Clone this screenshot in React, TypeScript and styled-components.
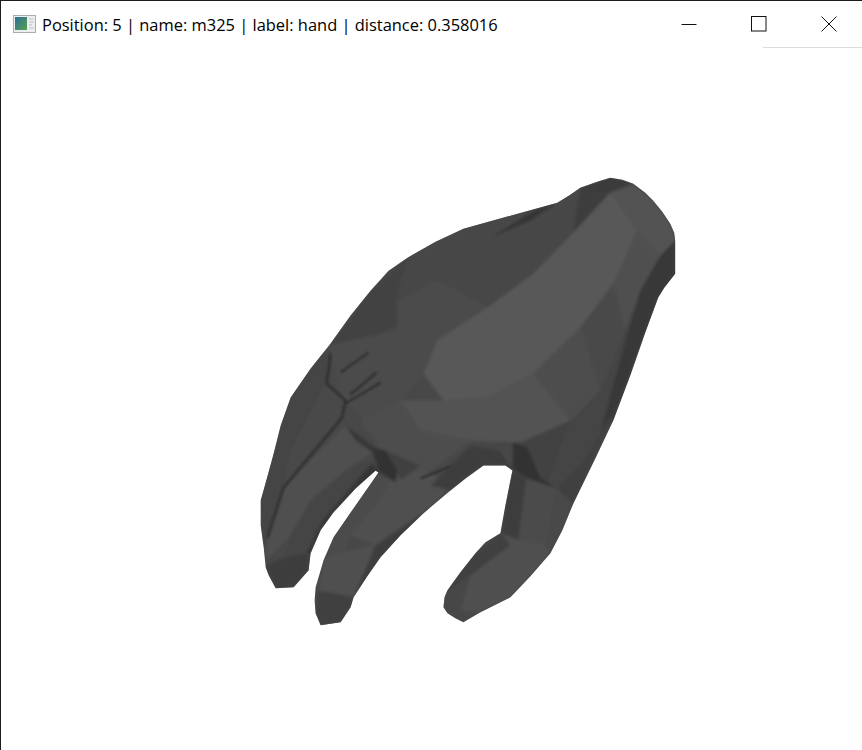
import styled, { createGlobalStyle } from "styled-components";

const OUTLINE =
  "610,177 622,179 633,183 645,192 653,200 662,211 670,223 674,232 675,240 675,273 664,287 658,297 645,332 630,375 613,420 595,458 573,503 562,530 550,553 530,576 510,597 480,612 463,622 455,618 447,613 443,607 444,597 447,590 460,572 475,553 485,542 500,533 505,505 512,470 505,465 483,465 465,478 450,490 430,507 423,513 400,535 380,557 366,577 353,597 350,607 340,622 320,625 315,613 314,600 315,587 323,560 333,537 355,505 378,472 375,470 355,488 333,512 320,530 310,553 308,570 293,587 275,588 268,575 265,567 263,547 260,525 260,500 267,475 273,453 280,425 290,397 310,368 330,343 350,315 370,290 388,270 407,257 435,241 463,228 510,215 557,202 570,194 580,187 597,181";

type Facet = { points: string; fill: string };

const FACETS: Facet[] = [
  // back of the hand, upper side
  { points: "407,257 463,228 557,202 580,187 573,232 533,273 487,307 437,340 395,350 370,330 380,290", fill: "#474747" },
  { points: "330,343 370,290 407,257 395,300 398,325 355,345", fill: "#434343" },
  { points: "398,300 437,280 487,307 437,340 423,373 395,350", fill: "#4b4b4b" },
  { points: "490,237 533,210 557,202 530,220", fill: "#363636" },
  // knuckle creases
  { points: "330,345 395,330 423,373 400,400 365,420 340,395", fill: "#4c4c4c" },
  // tip of the palm
  { points: "580,187 610,177 633,183 610,192", fill: "#3b3b3b" },
  { points: "580,187 610,192 573,232", fill: "#3c3c3c" },
  { points: "610,192 633,183 653,200 670,223 675,240 660,255 637,230", fill: "#525252" },
  // light central area
  { points: "610,192 637,230 613,283 580,327 533,373 487,397 443,400 423,373 437,340 487,307 533,273 573,232", fill: "#585858" },
  { points: "637,230 660,255 640,290 625,330 613,283", fill: "#505050" },
  { points: "613,283 625,330 600,390 580,327", fill: "#494949" },
  { points: "580,327 600,390 570,420 533,373", fill: "#4d4d4d" },
  { points: "443,400 487,397 533,373 570,420 520,442 470,440 420,430 400,400", fill: "#525252" },
  { points: "360,420 400,400 420,430 470,440 430,470 395,482 375,440", fill: "#4e4e4e" },
  // right edge
  { points: "660,255 675,240 675,273 658,297 613,420 600,432 625,340 640,290", fill: "#393939" },
  { points: "640,290 625,340 600,432 585,460 565,490 545,480 570,420 600,390 625,330", fill: "#454545" },
  { points: "600,432 620,400 573,503 555,490 585,460", fill: "#3f3f3f" },
  // wrist of the thumb
  { points: "470,445 520,442 570,420 545,485 525,470 510,445", fill: "#424242" },
  { points: "513,442 527,447 540,477 556,488 527,478 512,468", fill: "#323232" },
  // thumb
  { points: "512,470 526,478 518,540 501,533 505,505", fill: "#3e3e3e" },
  { points: "526,478 556,488 552,520 545,545 518,540", fill: "#4c4c4c" },
  { points: "556,488 573,503 550,553 545,545", fill: "#484848" },
  { points: "501,533 518,540 545,545 550,553 510,597 480,612 460,610 470,575", fill: "#505050" },
  { points: "475,553 501,533 510,545 470,575 447,590 460,572", fill: "#3f3f3f" },
  { points: "447,590 470,575 460,610 463,622 455,618 443,607", fill: "#474747" },
  // fingers, dark underside
  { points: "378,472 372,462 345,485 322,520 300,560 310,553 320,530 333,512 355,488", fill: "#363636" },
  { points: "345,460 372,462 322,520 300,565 308,570 293,587 280,570 290,535 310,490", fill: "#444444" },
  { points: "283,487 345,425 372,452 345,470 310,500 290,535 265,560 267,537", fill: "#4f4f4f" },
  { points: "265,567 275,560 308,553 308,570 293,587 275,588", fill: "#3d3d3d" },
  { points: "260,500 273,453 290,397 325,350 325,383 283,487 267,537 263,547", fill: "#444444" },
  { points: "325,383 345,400 340,420 283,487 290,450", fill: "#4a4a4a" },
  // second finger
  { points: "378,472 390,478 380,500 350,535 340,560 323,560 333,537 355,505", fill: "#4c4c4c" },
  { points: "390,478 425,470 450,485 423,513 400,535 375,545 350,535 380,500", fill: "#505050" },
  { points: "323,560 340,552 375,545 360,580 353,597 335,600 318,590", fill: "#4f4f4f" },
  { points: "375,545 430,507 423,513 380,557 353,597", fill: "#3d3d3d" },
  { points: "315,613 318,590 353,597 350,607 340,622 320,625", fill: "#3f3f3f" },
  // dark band over the web between fingers
  { points: "345,425 372,445 395,468 395,482 378,472 372,452 355,440", fill: "#383838" },
  { points: "372,447 385,450 397,470 395,482 380,470", fill: "#303030" },
  { points: "385,450 420,465 400,480 397,470", fill: "#404040" },
  { points: "483,465 505,465 512,470 500,450 470,445 430,485 450,490", fill: "#3c3c3c" },
];

const CREASES = [
  "330,353 326,383",
  "326,383 345,400 341,418",
  "341,418 283,487 267,537",
  "345,403 380,382",
  "350,394 376,372",
  "340,372 368,352",
  "420,478 450,466",
];

const HandModel = () => (
  <HandSvg viewBox="0 47 862 702" aria-label="hand mesh">
    <defs>
      <clipPath id="hand-outline">
        <polygon points={OUTLINE} />
      </clipPath>
      <filter id="soft" x="-5%" y="-5%" width="110%" height="110%">
        <feGaussianBlur stdDeviation="1.6" />
      </filter>
      <filter id="crease" x="-5%" y="-5%" width="110%" height="110%">
        <feGaussianBlur stdDeviation="0.9" />
      </filter>
    </defs>
    <polygon points={OUTLINE} fill="#484848" />
    <g clipPath="url(#hand-outline)">
      <g filter="url(#soft)">
        {FACETS.map((facet) => (
          <polygon key={facet.points} points={facet.points} fill={facet.fill} />
        ))}
      </g>
      <g filter="url(#crease)">
        {CREASES.map((line) => (
          <polyline key={line} points={line} fill="none" stroke="#2c2c2c" strokeWidth="2" />
        ))}
      </g>
    </g>
  </HandSvg>
);

const AppIcon = () => (
  <svg width="23" height="18" viewBox="0 0 23 18">
    <defs>
      <linearGradient id="app-icon" x1="0" y1="0" x2="1" y2="1">
        <stop offset="0" stopColor="#2a6f96" />
        <stop offset="1" stopColor="#5aa04e" />
      </linearGradient>
    </defs>
    <rect x="0.5" y="0.5" width="22" height="17" fill="#eceef0" stroke="#a8adb2" />
    <rect x="2" y="2" width="12" height="13" fill="url(#app-icon)" />
    <path d="M16 4h4M16 7h5M16 10h3M16 13h5" stroke="#b9c2c4" strokeWidth="1" />
  </svg>
);

const App = () => (
  <Window>
    <GlobalStyle />
    <TitleBar>
      <AppIcon />
      <Title>Position: 5 | name: m325 | label: hand | distance: 0.358016</Title>
      <Controls>
        <ControlButton>
          <svg width="16" height="16" viewBox="0 0 16 16">
            <path d="M0.5 8.5h15" stroke="#111" strokeWidth="1" />
          </svg>
        </ControlButton>
        <ControlButton>
          <svg width="16" height="16" viewBox="0 0 16 16">
            <rect x="0.5" y="0.5" width="14.5" height="14.5" fill="none" stroke="#111" strokeWidth="1" />
          </svg>
        </ControlButton>
        <ControlButton>
          <svg width="16" height="16" viewBox="0 0 16 16">
            <path d="M0.5 0.5l15 15M15.5 0.5l-15 15" stroke="#111" strokeWidth="1" />
          </svg>
        </ControlButton>
      </Controls>
    </TitleBar>
    <Canvas>
      <HandModel />
    </Canvas>
  </Window>
);

export default App;

const GlobalStyle = createGlobalStyle`
  html, body {
    margin: 0;
    padding: 0;
    background: #ffffff;
  }
`;

const Window = styled.div`
  width: 862px;
  height: 750px;
  box-sizing: border-box;
  display: flex;
  flex-direction: column;
  background: #ffffff;
  border-top: 1px solid #1c1c1c;
  border-left: 1px solid #1c1c1c;
  overflow: hidden;
`;

const TitleBar = styled.div`
  position: relative;
  height: 46px;
  flex-shrink: 0;
  display: flex;
  align-items: center;
  padding-left: 12px;
  box-sizing: border-box;

  &::after {
    content: "";
    position: absolute;
    right: 0;
    bottom: -1px;
    width: 99px;
    height: 1px;
    background: #dcdcdc;
  }
`;

const Title = styled.span`
  margin-left: 6px;
  font-family: "Open Sans", "Liberation Sans", sans-serif;
  font-size: 16.45px;
  color: #000000;
  white-space: nowrap;
`;

const Controls = styled.div`
  margin-left: auto;
  display: flex;
  gap: 4px;
  align-self: flex-start;
`;

const ControlButton = styled.div`
  width: 66px;
  height: 45px;
  display: flex;
  align-items: center;
  justify-content: center;
`;

const Canvas = styled.div`
  flex: 1;
  min-height: 0;
`;

const HandSvg = styled.svg`
  display: block;
  width: 861px;
  height: 703px;
`;
